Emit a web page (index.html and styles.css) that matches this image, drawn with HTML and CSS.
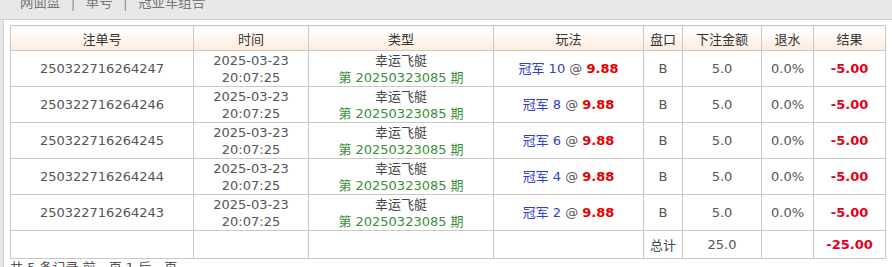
FILE: index.html
```html
<!DOCTYPE html>
<html>
<head>
<meta charset="utf-8">
<link rel="stylesheet" href="styles.css">
</head>
<body>
<div class="topbar"><div class="tabs"><span>网面盘</span><span class="sep">|</span><span>单号</span><span class="sep">|</span><span>冠亚车组合</span></div></div>
<div class="panel">
<table class="bets">
<colgroup>
<col style="width:183px"><col style="width:115px"><col style="width:185px"><col style="width:150px"><col style="width:39px"><col style="width:79px"><col style="width:52px"><col style="width:72px">
</colgroup>
<thead>
<tr><th>注单号</th><th>时间</th><th>类型</th><th>玩法</th><th>盘口</th><th>下注金额</th><th>退水</th><th>结果</th></tr>
</thead>
<tbody>
<tr><td>250322716264247</td><td>2025-03-23<br>20:07:25</td><td><span class="game">幸运飞艇</span><br><span class="issue">第 20250323085 期</span></td><td><span class="play">冠军 10</span> @ <b class="odds">9.88</b></td><td>B</td><td>5.0</td><td>0.0%</td><td class="res">-5.00</td></tr>
<tr><td>250322716264246</td><td>2025-03-23<br>20:07:25</td><td><span class="game">幸运飞艇</span><br><span class="issue">第 20250323085 期</span></td><td><span class="play">冠军 8</span> @ <b class="odds">9.88</b></td><td>B</td><td>5.0</td><td>0.0%</td><td class="res">-5.00</td></tr>
<tr><td>250322716264245</td><td>2025-03-23<br>20:07:25</td><td><span class="game">幸运飞艇</span><br><span class="issue">第 20250323085 期</span></td><td><span class="play">冠军 6</span> @ <b class="odds">9.88</b></td><td>B</td><td>5.0</td><td>0.0%</td><td class="res">-5.00</td></tr>
<tr><td>250322716264244</td><td>2025-03-23<br>20:07:25</td><td><span class="game">幸运飞艇</span><br><span class="issue">第 20250323085 期</span></td><td><span class="play">冠军 4</span> @ <b class="odds">9.88</b></td><td>B</td><td>5.0</td><td>0.0%</td><td class="res">-5.00</td></tr>
<tr><td>250322716264243</td><td>2025-03-23<br>20:07:25</td><td><span class="game">幸运飞艇</span><br><span class="issue">第 20250323085 期</span></td><td><span class="play">冠军 2</span> @ <b class="odds">9.88</b></td><td>B</td><td>5.0</td><td>0.0%</td><td class="res">-5.00</td></tr>
<tr class="total"><td></td><td></td><td></td><td></td><td class="label">总计</td><td>25.0</td><td></td><td class="res">-25.00</td></tr>
</tbody>
</table>
<div class="pager">共 5 条记录 前一页 1 后一页</div>
</div>
</body>
</html>
```

FILE: styles.css
```css
html, body {
  margin: 0;
  padding: 0;
  background: #e8e8e8;
  font-family: "DejaVu Sans", "Noto Sans CJK SC", sans-serif;
  font-size: 13px;
  color: #555;
}
.topbar {
  height: 19px;
  overflow: hidden;
  border-bottom: 1px solid #cfcfcf;
}
.tabs {
  margin-top: -8px;
  padding-left: 20px;
  line-height: 19px;
  color: #777;
  font-family: "Noto Sans CJK SC", sans-serif;
  font-size: 13.4px;
}
.tabs .sep {
  margin: 0 11px;
}
.panel {
  margin-left: 3px;
  border-left: 1px solid #d0d0d0;
  background: #fff;
  padding: 5px 0 0 6px;
  height: 260px;
}
.bets {
  border-collapse: collapse;
  table-layout: fixed;
  width: 875px;
}
.bets th, .bets td {
  border: 1px solid #c8c8c8;
  text-align: center;
  vertical-align: middle;
  padding: 0;
}
.bets th {
  height: 24px;
  background: linear-gradient(#ffffff 0%, #fffaf6 35%, #fdebdc 100%);
  font-family: "Noto Sans CJK SC", sans-serif;
  font-weight: normal;
  color: #333;
  font-size: 13px;
  line-height: 17px;
}
.bets td {
  height: 33px;
  line-height: 17px;
}
.game {
  font-family: "Noto Sans CJK SC", sans-serif;
  color: #444;
}
.issue {
  color: #3a8f3a;
}
.play {
  color: #3040c8;
}
.odds {
  color: #e30000;
  font-weight: bold;
}
.res {
  color: #e3001b;
  font-weight: bold;
}
.total td {
  height: 27px;
}
.total .label {
  font-family: "Noto Sans CJK SC", sans-serif;
  color: #444;
}
.pager {
  padding-top: 0;
  color: #555;
  line-height: 17px;
}
```
